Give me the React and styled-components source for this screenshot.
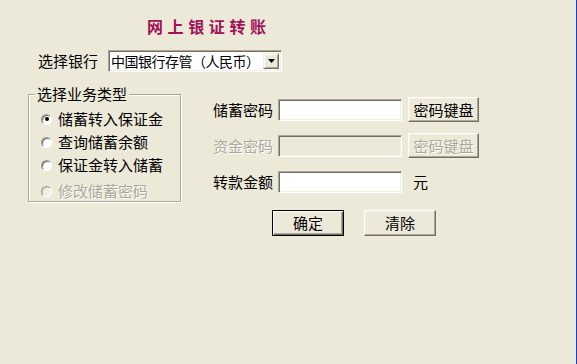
import React from "react";
import styled, { createGlobalStyle, css } from "styled-components";

const Global = createGlobalStyle`
  html, body { margin: 0; padding: 0; background: #ECE9D8; }
  * { box-sizing: border-box; }
`;

const FONT = `"Noto Sans CJK SC", "Noto Sans", sans-serif`;

const Page = styled.div`
  width: 577px;
  height: 364px;
  background: #ECE9D8;
  border-right: 1px solid #0B3FE2;
  font-family: ${FONT};
  font-size: 15px;
  color: #000;
  display: flex;
  flex-direction: column;
  overflow: hidden;
`;

const Title = styled.h1`
  margin: 18px 0 0 147px;
  font-size: 16px;
  line-height: 16px;
  font-weight: 700;
  letter-spacing: 4.6px;
  color: #A0145A;
`;

const BankRow = styled.div`
  display: flex;
  align-items: center;
  gap: 10px;
  margin: 16px 0 0 38px;
  height: 22px;
`;

const Label = styled.span`
  width: 60px;
  flex: none;
  line-height: 16px;
  white-space: nowrap;
  ${(p) =>
    p.$disabled &&
    css`
      color: #ACA899;
      text-shadow: 1px 1px 0 #fff;
    `}
`;

const SelectBox = styled.div`
  width: 174px;
  height: 22px;
  display: flex;
  align-items: center;
  background: #fff;
  border: 1px solid;
  border-color: #ACA899 #fff #fff #ACA899;
  box-shadow: inset 1px 1px 0 #716F64, inset -1px -1px 0 #F1EFE2;
  padding: 2px 2px 2px 2px;
  font-size: 14px;
`;

const SelectText = styled.span`
  flex: 1;
  min-width: 0;
  line-height: 16px;
  white-space: nowrap;
  letter-spacing: -0.5px;
`;

const DropButton = styled.span`
  width: 16px;
  height: 16px;
  flex: none;
  background: #ECE9D8;
  border: 1px solid;
  border-color: #F1EFE2 #716F64 #716F64 #F1EFE2;
  box-shadow: inset 1px 1px 0 #fff, inset -1px -1px 0 #ACA899;
  display: flex;
  align-items: center;
  justify-content: center;
`;

const Body = styled.div`
  display: flex;
  align-items: flex-start;
  margin-top: 14px;
  padding-left: 28px;
`;

const Group = styled.fieldset`
  margin: 0;
  width: 153px;
  height: 116px;
  padding: 9px 0 0 6px;
  border: 1px solid #ACA899;
  box-shadow: inset 1px 1px 0 #fff, 1px 1px 0 #fff;
  display: flex;
  flex-direction: column;
  gap: 7px;
`;

const Legend = styled.legend`
  padding: 0 2px;
  margin-left: 0;
  line-height: 16px;
  background: #ECE9D8;
  position: relative;
`;

const RadioRow = styled.label`
  display: flex;
  align-items: center;
  gap: 6px;
  height: 16px;
  margin-left: 6px;
  line-height: 16px;
  white-space: nowrap;
  ${(p) =>
    p.$disabled &&
    css`
      color: #ACA899;
      text-shadow: 1px 1px 0 #fff;
      margin-top: 3px;
    `}
`;

const RadioDot = styled.span`
  width: 11px;
  height: 11px;
  flex: none;
  border-radius: 50%;
  border: 1px solid;
  border-color: #9D9A8B #fff #fff #9D9A8B;
  background: ${(p) => (p.$disabled ? "#F1EFE2" : "#fff")};
  box-shadow: inset 1px 1px 0 ${(p) => (p.$disabled ? "#D4D0C8" : "#6F6D62")};
  display: flex;
  align-items: center;
  justify-content: center;
  &::after {
    content: "";
    width: 4px;
    height: 4px;
    border-radius: 50%;
    background: ${(p) => (p.$checked ? "#000" : "transparent")};
  }
`;

const FormCol = styled.div`
  margin-left: 32px;
  padding-top: 11px;
  display: flex;
  flex-direction: column;
  gap: 11px;
`;

const FieldRow = styled.div`
  display: flex;
  align-items: center;
  height: 25px;
`;

const TextInput = styled.input`
  width: 124px;
  height: 22px;
  margin: 0 6px 0 5px;
  padding: 2px 3px;
  font-family: ${FONT};
  font-size: 14px;
  background: ${(p) => (p.disabled ? "#ECE9D8" : "#fff")};
  border: 1px solid;
  border-color: #ACA899 #fff #fff #ACA899;
  box-shadow: inset 1px 1px 0 #716F64, inset -1px -1px 0 #F1EFE2;
  outline: none;
`;

const Unit = styled.span`
  margin-left: 5px;
  line-height: 16px;
`;

const Button = styled.button`
  font-family: ${FONT};
  font-size: 15px;
  line-height: 16px;
  color: #000;
  padding: 0;
  width: ${(p) => p.$w || 71}px;
  height: ${(p) => p.$h || 25}px;
  background: #ECE9D8;
  border: 1px solid;
  border-color: #fff #716F64 #716F64 #fff;
  box-shadow: inset -1px -1px 0 #ACA899, inset 1px 1px 0 #F1EFE2;
  cursor: default;
  &:disabled {
    color: #ACA899;
    text-shadow: 1px 1px 0 #fff;
  }
  ${(p) =>
    p.$default &&
    css`
      border: 1px solid #000;
      box-shadow: inset 1px 1px 0 #fff, inset -1px -1px 0 #716F64,
        inset -2px -2px 0 #ACA899;
    `}
`;

const ActionRow = styled.div`
  display: flex;
  gap: 20px;
  margin: 5px 0 0 59px;
`;

const Arrow = () => (
  <svg width="7" height="4" viewBox="0 0 7 4">
    <path d="M0 0h7L3.5 4z" fill="#000" />
  </svg>
);

const options = [
  { text: "储蓄转入保证金", checked: true },
  { text: "查询储蓄余额" },
  { text: "保证金转入储蓄" },
  { text: "修改储蓄密码", disabled: true },
];

export default function App() {
  return (
    <Page>
      <Global />
      <Title>网上银证转账</Title>
      <BankRow>
        <Label>选择银行</Label>
        <SelectBox>
          <SelectText>中国银行存管（人民币）</SelectText>
          <DropButton>
            <Arrow />
          </DropButton>
        </SelectBox>
      </BankRow>
      <Body>
        <Group>
          <Legend>选择业务类型</Legend>
          {options.map((o) => (
            <RadioRow key={o.text} $disabled={o.disabled}>
              <RadioDot $checked={o.checked} $disabled={o.disabled} />
              {o.text}
            </RadioRow>
          ))}
        </Group>
        <FormCol>
          <FieldRow>
            <Label>储蓄密码</Label>
            <TextInput type="password" />
            <Button>密码键盘</Button>
          </FieldRow>
          <FieldRow>
            <Label $disabled>资金密码</Label>
            <TextInput type="password" disabled />
            <Button disabled>密码键盘</Button>
          </FieldRow>
          <FieldRow>
            <Label>转款金额</Label>
            <TextInput type="text" />
            <Unit>元</Unit>
          </FieldRow>
          <ActionRow>
            <Button $default $w={72} $h={26}>
              确定
            </Button>
            <Button $w={72} $h={26}>
              清除
            </Button>
          </ActionRow>
        </FormCol>
      </Body>
    </Page>
  );
}
